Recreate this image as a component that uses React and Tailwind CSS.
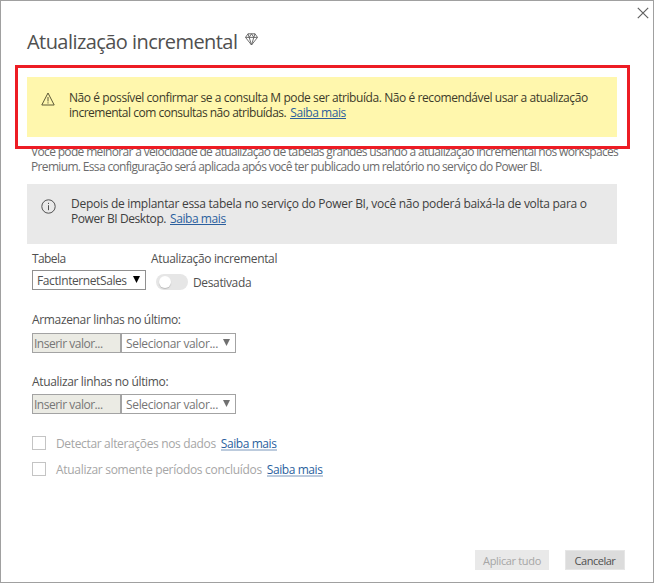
import React from "react";

const Link = ({ children, className = "" }) => (
  <a className={`tracking-[-0.43px] text-[#2b5f9e] ${className}`}>{children}</a>
);

const Gem = () => (
  <svg width="13" height="13" viewBox="0 0 13 13" fill="none" stroke="#606060" strokeWidth="0.9" strokeLinejoin="round">
    <path d="M3 .8h7l2.500 3.600L6.500 12 .5 4.400zM.5 4.400h12M3 .8l1.200 3.600L6.500 12 8.800 4.400 10 .8M4.200 4.400 6.500.8l2.300 3.600" />
  </svg>
);

const Warning = () => (
  <svg width="14" height="14" viewBox="0 0 14 14" fill="none" stroke="#5c5836" strokeWidth="1">
    <path d="M7 1 13.200 13H.8z" />
    <path d="M7 5v4.500M7 10.300v1.200" />
  </svg>
);

const Info = () => (
  <svg width="15" height="15" viewBox="0 0 15 15" fill="none" stroke="#505050" strokeWidth="1">
    <circle cx="7.500" cy="7.500" r="6.700" />
    <path d="M7.500 6.200v5M7.500 3.800v1.200" />
  </svg>
);

const Arrow = ({ className }) => (
  <svg width="7" height="7" viewBox="0 0 7 7" className={`shrink-0 ${className}`}>
    <path d="M0 0h7L3.500 7z" fill="currentColor" />
  </svg>
);

const ValueRow = () => (
  <div className="flex h-5 w-[204px] text-[#767676]">
    <div className="w-[89px] border border-[#a3a3a3] bg-[#ebebe4] pl-px leading-[19px] tracking-[-0.49px]">Inserir valor...</div>
    <div className="flex w-[115px] items-center border border-[#a3a3a3] bg-white pl-1 leading-[19px]">
      <span className="w-[97px] tracking-[-0.34px]">Selecionar valor...</span>
      <Arrow className="-mt-px text-[#707070]" />
    </div>
  </div>
);

const Check = ({ label, className }) => (
  <div className="flex h-[14px] items-center">
    <span className="h-[14px] w-[14px] border border-[#c4c4c4]" />
    <span className={`ml-[10px] text-[#a6a6a6] ${className}`}>{label}</span>
    <Link className="ml-[5px] mt-px h-[15px] border-b-2 border-[#bccbdd]">Saiba mais</Link>
  </div>
);

export default function App() {
  return (
    <div className="relative flex h-[583px] w-[654px] flex-col overflow-hidden whitespace-nowrap border border-[#a0a0a0] bg-white font-['Open_Sans','Noto_Sans',sans-serif] text-[12px] leading-[15px] text-[#505050]">
      <div className="flex h-[27px] justify-end pr-[4px] pt-[6px]">
        <svg width="12" height="12" viewBox="0 0 12 12" stroke="#606060" strokeWidth="1.200">
          <path d="m.8.8 10.400 10.400M11.200.8.8 11.200" />
        </svg>
      </div>
      <div className="flex h-[37px] pl-[26px]">
        <h1 className="w-[210px] text-[20px] font-normal leading-[28px] tracking-[-0.56px]">Atualização incremental</h1>
        <span className="ml-2 mt-[5px]"><Gem /></span>
      </div>
      <div className="h-[79px] w-full" />
      <p className="h-[39px] pl-[30px] text-[#6c6c6c]">
        <span className="block tracking-[-0.66px]">Você pode melhorar a velocidade de atualização de tabelas grandes usando a atualização incremental nos workspaces</span>
        <span className="block tracking-[-0.66px]">Premium. Essa configuração será aplicada após você ter publicado um relatório no serviço do Power BI.</span>
      </p>
      <div className="ml-[26px] mt-px flex h-[60px] w-[590px] bg-[#e9e9e9] pl-[14px] pt-[12px] text-[#404040]">
        <span className="mt-[3px] w-[30px]"><Info /></span>
        <p>
          <span className="block tracking-[-0.28px]">Depois de implantar essa tabela no serviço do Power BI, você não poderá baixá-la de volta para o</span>
          <span className="flex">
            <span className="mr-[4px] tracking-[-0.42px]">Power BI Desktop.</span>
            <Link className="h-[14px] border-b border-[#2b5f9e]">Saiba mais</Link>
          </span>
        </p>
      </div>
      <div className="ml-[31px] mt-[7px] flex">
        <div className="w-[119px]">
          <div className="tracking-[-0.6px]">Tabela</div>
          <div className="mt-1 flex h-5 w-[114px] items-center border border-[#909090] pl-1">
            <span className="w-[96px] tracking-[-0.41px]">FactInternetSales</span>
            <Arrow className="-mt-px text-black" />
          </div>
        </div>
        <div>
          <div className="tracking-[-0.34px]">Atualização incremental</div>
          <div className="ml-[5px] mt-2 flex h-4 items-center">
            <span className="flex h-4 w-8 items-center rounded-full bg-[#e6e6e6] pl-[3px]">
              <span className="h-3 w-3 rounded-full bg-white shadow-[0_1px_1px_#bbb]" />
            </span>
            <span className="ml-[5px] tracking-[-0.36px]">Desativada</span>
          </div>
        </div>
      </div>
      <div className="ml-[31px] mt-[22px] h-[62px] shrink-0">
        <div className="mb-[6px] tracking-[-0.34px]">Armazenar linhas no último:</div>
        <ValueRow />
      </div>
      <div className="ml-[31px] h-[62px] shrink-0">
        <div className="mb-[5px] tracking-[-0.34px]">Atualizar linhas no último:</div>
        <ValueRow />
      </div>
      <div className="ml-[31px] flex flex-col gap-3">
        <Check label="Detectar alterações nos dados" className="tracking-[-0.34px]" />
        <Check label="Atualizar somente períodos concluídos" className="tracking-[-0.3px]" />
      </div>
      <div className="mb-3 mr-[28px] mt-auto flex justify-end gap-4 text-[11px]">
        <button className="h-5 w-[74px] bg-[#e9e9e9] tracking-[-0.34px] text-[#a6a6a6]">Aplicar tudo</button>
        <button className="h-5 w-[60px] border border-[#e6e6e6] bg-[#dcdcdc] tracking-[-0.48px]">Cancelar</button>
      </div>
      <div className="absolute left-[14px] top-[64px] h-[84px] w-[615px] border-[3px] border-[#ed1c24] bg-white pl-[9px] pt-[9px]">
        <div className="flex h-[60px] w-[590px] bg-[#fff7ad] pl-[14px] pt-[13px] text-[#3c3a2a]">
          <span className="mt-[2px] w-[28px]"><Warning /></span>
          <p>
            <span className="block tracking-[-0.42px]">Não é possível confirmar se a consulta M pode ser atribuída. Não é recomendável usar a atualização</span>
            <span className="flex">
              <span className="mr-[4px] tracking-[-0.49px]">incremental com consultas não atribuídas.</span>
              <Link className="h-[14px] border-b border-[#2b5f9e]">Saiba mais</Link>
            </span>
          </p>
        </div>
      </div>
    </div>
  );
}
